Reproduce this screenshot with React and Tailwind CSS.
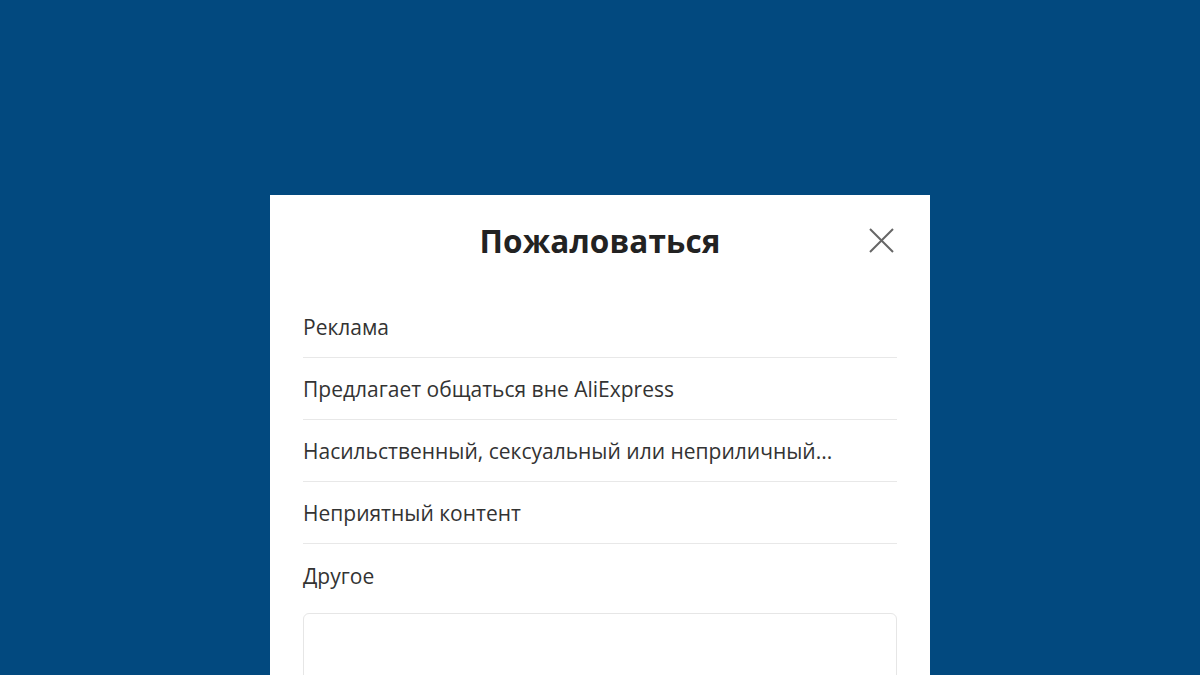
import React from "react";

const items = [
  "Реклама",
  "Предлагает общаться вне AliExpress",
  "Насильственный, сексуальный или неприличный...",
  "Неприятный контент",
];

export default function App() {
  return (
    <div
      className="w-[1200px] h-[675px] bg-[#02497f] overflow-hidden flex justify-center pt-[195px]"
      style={{ fontFamily: '"Open Sans", "Noto Sans", sans-serif' }}
    >
      <div className="w-[660px] h-[480px] bg-white px-[33px]">
        <div className="h-[101px] flex items-center justify-center relative">
          <h1 className="text-[31.5px] font-bold text-[#222] mt-[-10px] tracking-[0.1px]">Пожаловаться</h1>
          <svg
            className="absolute right-[3px] top-[33px]"
            width="25"
            height="25"
            viewBox="0 0 25 25"
          >
            <path d="M1 1 L24 24 M24 1 L1 24" stroke="#666" strokeWidth="2" fill="none" />
          </svg>
        </div>
        {items.map((t) => (
          <div
            key={t}
            className="h-[62px] flex items-center border-b border-[#e8e8e8] text-[21px] text-[#333]"
          >
            <span className="mt-[3px]">{t}</span>
          </div>
        ))}
        <div className="h-[62px] flex items-center text-[21px] text-[#333]">
          <span className="mt-[4px]">Другое</span>
        </div>
        <div className="mt-[7px] h-[120px] border border-[#e6e6e6] rounded-[6px]"></div>
      </div>
    </div>
  );
}
